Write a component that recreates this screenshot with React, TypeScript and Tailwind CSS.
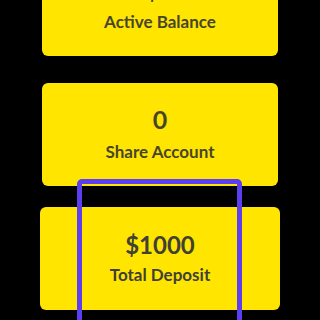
const cards = [
  { value: '$0', label: 'Active Balance' },
  { value: '0', label: 'Share Account' },
]

export default function App() {
  return (
    <div className="relative h-[320px] w-[320px] overflow-hidden bg-black" style={{ fontFamily: 'Lato, "Noto Sans", sans-serif' }}>
      <div className="-mt-[47px] flex flex-col px-[42px]">
        {cards.map((card, i) => (
          <div
            key={card.label}
            className={`flex h-[103px] flex-col items-center justify-center gap-[9px] rounded-[6px] bg-[#ffe500] text-[#47452b] ${i === 0 ? 'mb-[27px]' : 'mb-[21px]'}`}
          >
            <div className="text-[25px] font-bold leading-[26px]">{card.value}</div>
            <div className="text-[17px] font-bold leading-[22px]">{card.label}</div>
          </div>
        ))}
        {/* hovered card, a little larger */}
        <div className="-mx-[2px] flex h-[103px] flex-col items-center justify-center gap-[6px] rounded-[6px] bg-[#ffe500] text-[#404036]">
          <div className="text-[24px] font-bold leading-[26px]">$1000</div>
          <div className="text-[17px] font-bold leading-[22px]">Total Deposit</div>
        </div>
      </div>
      <div className="absolute left-[77px] top-[179px] h-[160px] w-[165px] rounded-[5px] border-[5px] border-[#5b3ef2]" />
    </div>
  )
}
